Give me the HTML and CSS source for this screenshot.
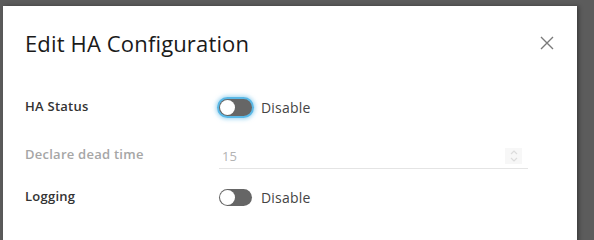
FILE: index.html
```html
<!DOCTYPE html>
<html>
<head>
<meta charset="utf-8">
<link rel="stylesheet" href="styles.css">
</head>
<body>
<div class="modal">
  <div class="header">
    <h3 class="title">Edit HA Configuration</h3>
    <button class="close" aria-label="Close">
      <svg width="14" height="14" viewBox="0 0 14 14"><path d="M1 1 L13 13 M13 1 L1 13" stroke="#7a7a7a" stroke-width="1.4" fill="none"/></svg>
    </button>
  </div>
  <div class="form">
    <div class="row row-status">
      <label class="label">HA Status</label>
      <div class="control shift">
        <span class="toggle focus"><span class="knob"></span></span>
        <span class="toggle-text">Disable</span>
      </div>
    </div>
    <div class="row row-dead disabled">
      <label class="label">Declare dead time</label>
      <div class="control">
        <div class="input">
          <span class="value">15</span>
          <span class="spin">
            <svg width="10" height="14" viewBox="0 0 10 14"><path d="M2 5 L5 2 L8 5 M2 9 L5 12 L8 9" stroke="#dcdcdc" stroke-width="1.2" fill="none"/></svg>
          </span>
        </div>
      </div>
    </div>
    <div class="row row-log">
      <label class="label">Logging</label>
      <div class="control shift">
        <span class="toggle"><span class="knob"></span></span>
        <span class="toggle-text">Disable</span>
      </div>
    </div>
  </div>
</div>
</body>
</html>
```

FILE: styles.css
```css
html, body {
  margin: 0;
  padding: 0;
  background: #5c5c5c;
  height: 100vh;
  overflow: hidden;
}
body {
  font-family: "Open Sans", "Liberation Sans", sans-serif;
  padding: 6px 0 0 3px;
  box-sizing: border-box;
}
.modal {
  width: 574px;
  min-height: 100%;
  padding-bottom: 40px;
  background: #ffffff;
  box-shadow: 2px 0 4px rgba(0,0,0,0.35);
}
.header {
  display: flex;
  align-items: flex-start;
  justify-content: space-between;
  padding: 22px 22px 0 22px;
}
.title {
  margin: 0;
  font-size: 22px;
  font-weight: 400;
  color: #1a1a1a;
  line-height: 30px;
  letter-spacing: 0.15px;
}
.close {
  border: none;
  background: none;
  padding: 0;
  margin-top: 8px;
  margin-right: 1px;
  width: 14px;
  height: 14px;
  display: flex;
}
.form {
  padding: 36px 22px 0 22px;
}
.row {
  display: flex;
  align-items: center;
}
.row-status {
  height: 24px;
}
.row-dead {
  height: 27px;
  margin-top: 24px;
}
.row-dead .label {
  padding-bottom: 4px;
}
.row-log {
  height: 24px;
  margin-top: 15px;
}
.label {
  width: 194px;
  font-size: 13px;
  font-weight: 600;
  color: #333;
  letter-spacing: 0.25px;
}
.row.disabled .label {
  color: #a6a6a6;
}
.control {
  display: flex;
  align-items: center;
}
.control.shift {
  margin-top: 2px;
}
.toggle {
  width: 33px;
  height: 17px;
  border-radius: 9px;
  background: #666666;
  display: flex;
  align-items: center;
  padding-left: 2px;
  box-sizing: border-box;
}
.toggle.focus {
  box-shadow: 0 0 0 2px #5ab8e6, 0 0 4px 3px rgba(90,184,230,0.6);
}
.knob {
  width: 15px;
  height: 15px;
  border-radius: 50%;
  background: #fff;
  margin-left: -1px;
}
.toggle-text {
  margin-left: 9px;
  font-size: 14px;
  color: #444;
  letter-spacing: 0.2px;
}
.input {
  width: 309px;
  height: 27px;
  border-bottom: 1px solid #e4e4e4;
  display: flex;
  align-items: center;
  justify-content: space-between;
  box-sizing: border-box;
}
.value {
  font-size: 13px;
  color: #b3b3b3;
  padding-left: 3px;
  padding-top: 2px;
}
.spin {
  width: 17px;
  height: 16px;
  background: #f7f7f7;
  display: flex;
  align-items: center;
  justify-content: center;
  margin-right: 6px;
  align-self: flex-start;
  margin-top: 6px;
}
```
